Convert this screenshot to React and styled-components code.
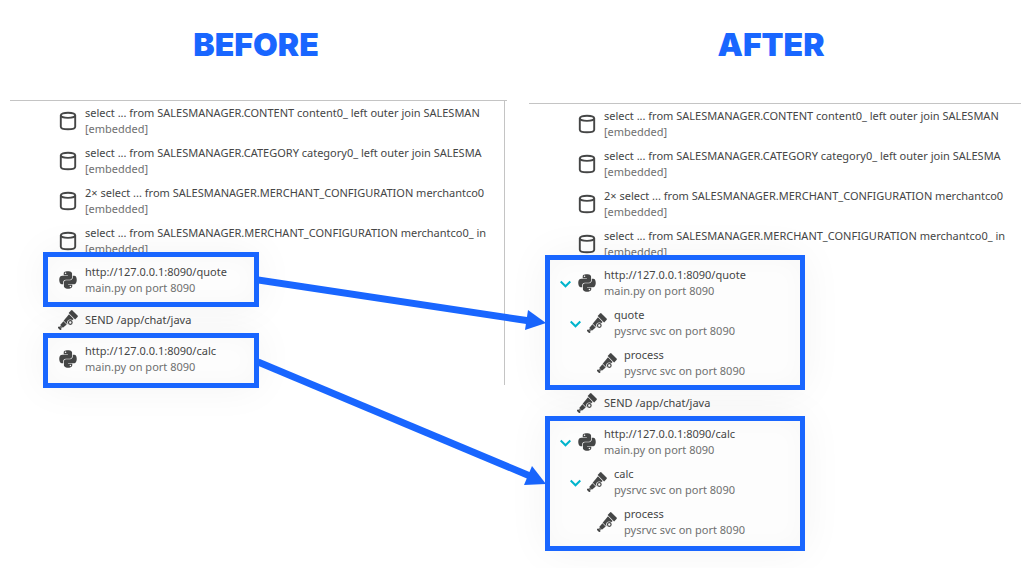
import React from "react";
import styled, { createGlobalStyle } from "styled-components";
import { FaPython } from "react-icons/fa";

const GlobalStyle = createGlobalStyle`
  * { box-sizing: border-box; }
  body {
    margin: 0;
    background: #ffffff;
    font-family: "Noto Sans", "Open Sans", sans-serif;
    color: #454646;
    overflow-x: hidden;
  }
`;

const Page = styled.main`
  display: grid;
  grid-template-columns: 497fr 492fr;
  column-gap: 22px;
  padding: 21px 12px 20px 10px;
`;

const Column = styled.section`
  position: relative;
  min-width: 0;
`;

const Title = styled.h1`
  margin: 0;
  padding-right: ${(p) => p.$inset}px;
  height: ${(p) => p.$height}px;
  font-family: Inter, sans-serif;
  font-size: 32px;
  line-height: 48px;
  font-weight: 900;
  text-align: center;
  color: #1966ff;
`;

const Trace = styled.div`
  border-top: 1px solid #c4c4c4;
`;

const List = styled.ul`
  list-style: none;
  margin: 0 ${(p) => (p.$ruled ? 2 : 0)}px 0 0;
  padding: 4px ${(p) => (p.$ruled ? 7 : 4)}px 0 0;
  border-right: ${(p) => (p.$ruled ? "1px solid #c4c4c4" : "none")};
  display: flow-root;
`;

const Group = styled.li`
  position: relative;
  width: ${(p) => p.$width}px;
  margin: ${(p) => (p.$last ? "3px 0 -3px" : "-13px 0 3px")};
  margin-left: ${(p) => p.$left}px;
  padding: ${(p) => (p.$last ? "5px 10px 8px" : "7px 10px 6px")};
  border: 5px solid #1966ff;
  background: #fdfdfd;
  box-shadow: 0 0 40px rgba(0, 0, 0, 0.05), inset 0 0 24px rgba(0, 0, 0, 0.025);

  ul {
    list-style: none;
    margin: 0;
    padding: 0;
  }
`;

const Row = styled.div`
  display: flex;
  align-items: center;
  margin-bottom: ${(p) => (p.$spaced ? 8 : 0)}px;
  padding-left: ${(p) => p.$indent}px;
`;

const IconBox = styled.span`
  flex: none;
  width: 20px;
  height: 20px;
  margin-right: 7px;
  color: #454646;

  svg {
    display: block;
    width: 20px;
    height: 20px;
  }
`;

const Toggle = styled.button`
  flex: none;
  width: 11px;
  height: 12px;
  margin: 0 6px 0 0;
  padding: 0;
  border: 0;
  background: none;
  cursor: pointer;

  svg {
    display: block;
  }
`;

const Label = styled.div`
  flex: 1;
  min-width: 0;
  white-space: nowrap;
  font-size: 11px;
  line-height: 16px;
`;

const Detail = styled.div`
  color: #6f7070;
`;

const Arrows = styled.svg`
  position: absolute;
  top: 249px;
  left: 248px;
  width: calc(100% - 209px);
  height: 240px;
  pointer-events: none;
`;

function Database() {
  return (
    <svg viewBox="0 0 20 20" fill="none" stroke="currentColor" strokeWidth="1.9">
      <ellipse cx="10" cy="4.3" rx="7.2" ry="2.6" />
      <path d="M2.8 4.3v11.4c0 1.5 3.2 2.6 7.2 2.6s7.2-1.1 7.2-2.6V4.3" />
    </svg>
  );
}

function Telescope() {
  return (
    <svg viewBox="0 0 20 20" fill="currentColor">
      <g transform="translate(1 19) rotate(-45)">
        <path d="M0 -1.9h2v3.8h-2z" />
        <path d="M2 -.9h1.600v1.800H2z" />
        <path d="M3.600 -1.900L8.600 -2.300V2.300L3.600 1.900z" />
        <path d="M9.200 -2.600L17.400 -3.300V3.300L9.200 2.600z" />
        <path d="M18.200 -4.600h3.400q1 0 1 1v7.200q0 1 -1 1h-3.400z" />
      </g>
      <circle cx="12.300" cy="12.500" r="3.100" fill="#fcfcfc" />
      <circle cx="12.300" cy="12.500" r="1.800" fill="none" stroke="currentColor" strokeWidth="1.200" />
    </svg>
  );
}

const icons = { db: Database, python: FaPython, otel: Telescope };

function Span({ icon, name, detail, indent = 0, spaced, open }) {
  const Icon = icons[icon];
  return (
    <Row $indent={indent} $spaced={spaced}>
      {open && (
        <Toggle type="button" aria-expanded="true" aria-label={`Collapse ${name}`}>
          <svg width="11" height="12" viewBox="0 0 11 12" fill="none" stroke="#00b4cc" strokeWidth="2">
            <path d="M.7 4.500l4.800 4.800L10.300 4.500" />
          </svg>
        </Toggle>
      )}
      <IconBox>
        <Icon aria-hidden="true" />
      </IconBox>
      <Label>
        <div>{name}</div>
        {detail && <Detail>{detail}</Detail>}
      </Label>
    </Row>
  );
}

const queries = [
  "select ... from SALESMANAGER.CONTENT content0_ left outer join SALESMAN",
  "select ... from SALESMANAGER.CATEGORY category0_ left outer join SALESMA",
  "2× select ... from SALESMANAGER.MERCHANT_CONFIGURATION merchantco0",
  "select ... from SALESMANAGER.MERCHANT_CONFIGURATION merchantco0_ in",
];

function Service({ path, nested, last }) {
  return (
    <Group $left={nested ? 16 : 33} $width={nested ? 260 : 216} $last={last}>
      <ul>
        <li>
          <Span icon="python" name={`http://127.0.0.1:8090/${path}`} detail="main.py on port 8090" open={nested} spaced={nested} />
        </li>
        {nested && (
          <>
            <li>
              <Span icon="otel" name={path} detail="pysrvc svc on port 8090" indent={10} open spaced />
            </li>
            <li>
              <Span icon="otel" name="process" detail="pysrvc svc on port 8090" indent={37} />
            </li>
          </>
        )}
      </ul>
    </Group>
  );
}

function TraceTree({ nested }) {
  return (
    <Trace>
      <List $ruled={!nested}>
        {queries.map((q) => (
          <li key={q}>
            <Span icon="db" name={q} detail="[embedded]" indent={48} spaced />
          </li>
        ))}
        <Service path="quote" nested={nested} />
        <li>
          <Span icon="otel" name="SEND /app/chat/java" indent={48} />
        </li>
        <Service path="calc" nested={nested} last />
      </List>
    </Trace>
  );
}

export default function App() {
  return (
    <>
      <GlobalStyle />
      <Page>
        <Column>
          <Title $height={79} $inset={5}>BEFORE</Title>
          <TraceTree />
          <Arrows viewBox="0 0 288 240" preserveAspectRatio="none" aria-hidden="true">
            <g stroke="#1966ff" strokeWidth="7">
              <path d="M0 10L272 51" />
              <path d="M0 92L272 206" />
            </g>
            <g fill="#1966ff">
              <path d="M270 40L288 53L267 60Z" />
              <path d="M274 196L288 214L266 215Z" />
            </g>
          </Arrows>
        </Column>
        <Column>
          <Title $height={82} $inset={8}>AFTER</Title>
          <TraceTree nested />
        </Column>
      </Page>
    </>
  );
}
